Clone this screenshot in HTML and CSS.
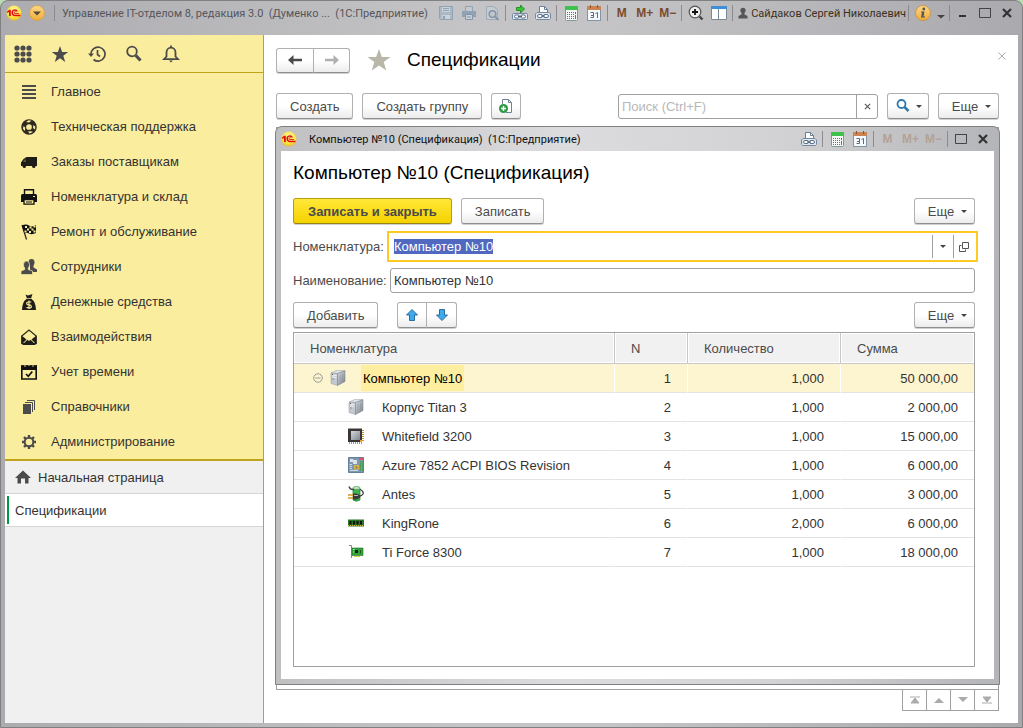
FILE: index.html
```html
<!DOCTYPE html>
<html lang="ru">
<head>
    <meta charset="UTF-8">
    <meta name="viewport" content="width=device-width, initial-scale=1.0">
    <title>Управление IT-отделом 8</title>
    <link rel="stylesheet" href="styles.css">
</head>
<body>

<!-- общие значки -->
<svg class="sprite" aria-hidden="true">
    <defs>
        <radialGradient id="gold" cx="50%" cy="35%" r="65%">
            <stop offset="0" stop-color="#fffbb0"/><stop offset="0.7" stop-color="#fbe23a"/><stop offset="1" stop-color="#e8b92c"/>
        </radialGradient>
        <linearGradient id="amber" x1="0" y1="0" x2="0" y2="1">
            <stop offset="0" stop-color="#fbd88b"/><stop offset="1" stop-color="#f0ac35"/>
        </linearGradient>
        <linearGradient id="steel" x1="0" y1="0" x2="1" y2="1">
            <stop offset="0" stop-color="#d5d9de"/><stop offset="1" stop-color="#7d848d"/>
        </linearGradient>
    </defs>
    <symbol id="i-logo" viewBox="0 0 16 16">
        <circle cx="8" cy="8" r="7.500" fill="url(#gold)"/>
        <path d="M1 6.500L3.300 4.800H4.800V11H3V7.200L1 7.800Z" fill="#e01010"/>
        <path d="M11.300 6.500A2.700 2.700 0 1 0 9 10.400H14.500" fill="none" stroke="#e01010" stroke-width="1.500"/>
        <path d="M10 7.200A1 1 0 1 0 9 8.600H13" fill="none" stroke="#e01010" stroke-width="0.900"/>
    </symbol>
    <symbol id="i-printlink" viewBox="0 0 16 16">
        <path d="M4.500 8V1.500H9.500L12.500 4.500V8" fill="#fff" stroke="#6a7f98"/>
        <path d="M9.500 1.500V4.500H12.500" fill="none" stroke="#6a7f98"/>
        <path d="M2 7.500H14L15.500 9V13.500L14.500 14.500H1.500L0.500 13.500V9Z" fill="#dfe6ee" stroke="#7288a0"/>
        <rect x="2.500" y="9.500" width="5" height="3" rx="1.500" fill="#fff" stroke="#5d728a"/>
        <rect x="8.500" y="9.500" width="5" height="3" rx="1.500" fill="#fff" stroke="#5d728a"/>
        <path d="M6 11H10" stroke="#4d6178"/>
    </symbol>
    <symbol id="i-calc" viewBox="0 0 16 16">
        <rect x="2.500" y="1.500" width="12" height="14" rx="1" fill="#f4f7f5" stroke="#7f9a90"/>
        <rect x="2" y="1" width="13" height="4" fill="#3fc24c"/>
        <path d="M4 7.500H11M4 9.500H11M4 11.500H11M4 13.500H11" stroke="#5f7573" stroke-dasharray="1 1"/>
        <path d="M12.500 7V9" stroke="#f03030"/><path d="M12.500 10V14" stroke="#5f7573"/>
    </symbol>
    <symbol id="i-cal" viewBox="0 0 16 16">
        <rect x="1.500" y="3" width="13" height="12.500" fill="#f6f9fb" stroke="#8295a5"/>
        <rect x="1" y="1" width="14" height="4" fill="#c98452"/>
        <path d="M4.500 0V3M11.500 0V3" stroke="#8c5530"/>
        <path d="M4.500 7.500H7.500V12.500H4.500M5 10.500H7.500M9.500 8.500L11.500 7.500V13" fill="none" stroke="#5c6c7c"/>
    </symbol>
    <symbol id="i-max" viewBox="0 0 12 12"><path d="M0.500 1.500H11.500V10.500H0.500Z" fill="none" stroke="#444"/><path d="M0 1.500H12" stroke="#444"/></symbol>
    <symbol id="i-close" viewBox="0 0 12 12"><path d="M2 2L10 10M10 2L2 10" stroke="#333" stroke-width="2.200"/></symbol>
    <symbol id="i-tower" viewBox="0 0 16 16">
        <path d="M1 3L6.500 0.500H15L8 3.500Z" fill="#dfe3e7" stroke="#9aa1a9" stroke-width="0.500"/>
        <path d="M1 3L7.500 3.500V15.500L1 13.500Z" fill="#c3c9d0" stroke="#8e959e" stroke-width="0.500"/>
        <path d="M7.500 3.500L15 0.800V11.500L7.500 15.500Z" fill="url(#steel)" stroke="#6d7580" stroke-width="0.500"/>
        <path d="M2 5L6.500 5.500M2 7L6.500 7.500" stroke="#f3f5f7"/><path d="M3 8.500V9.500M2.500 4V5" stroke="#555"/>
        <path d="M10 5V13.500M12.500 4V12" stroke="#858d97" stroke-width="0.500"/>
    </symbol>
</svg>

<div class="app">
    <header class="titlebar">
        <svg class="ico16 logo"><use href="#i-logo"/></svg>
        <button class="round" aria-label="Главное меню">
            <svg class="ico16" viewBox="0 0 16 16"><circle cx="8" cy="8" r="7.500" fill="url(#amber)" stroke="#d99c3c" stroke-width="0.700"/><path d="M4 6.500H12L8 10.500Z" fill="#5c4636"/></svg>
        </button>
        <span class="sep"></span>
        <span class="app-title">Управление IT-отделом 8, редакция 3.0 &nbsp;(Думенко ... &nbsp;(1С:Предприятие)</span>

        <button class="tool" disabled aria-label="Сохранить"><svg class="ico16" viewBox="0 0 16 16"><path d="M1.500 1.500H14.500V14.500H2.500L1.500 13.500Z" fill="#aab8c5" stroke="#8fa3b5"/><path d="M4 2H12V7H4Z" fill="#cbd2d8"/><path d="M5 3.500H11M5 5.500H11" stroke="#8fa3b5"/><path d="M4 10H12V14H4Z" fill="#cbd2d8"/><path d="M6 11V14" stroke="#8fa3b5" stroke-width="2"/></svg></button>
        <button class="tool" disabled aria-label="Печать"><svg class="ico16" viewBox="0 0 16 16"><path d="M4.500 6V1.500H11.500V6" fill="#c4cad0" stroke="#8fa3b5"/><path d="M1 6H15V12H1Z" fill="#8fa3b5"/><path d="M4.500 9.500H11.500V14.500H4.500Z" fill="#cbd0d5" stroke="#8395a7"/><path d="M6 12H10" stroke="#8395a7"/></svg></button>
        <button class="tool" disabled aria-label="Просмотр"><svg class="ico16" viewBox="0 0 16 16"><path d="M2.500 1.500H9.500L13.500 5V14.500H2.500Z" fill="#c7cbd0" stroke="#9dabb8"/><circle cx="8.500" cy="9" r="3.300" fill="#bdc6ce" stroke="#8395a7" stroke-width="1.500"/><path d="M11 11.500L14.500 15" stroke="#8395a7" stroke-width="2"/></svg></button>
        <span class="sep"></span>
        <button class="tool" aria-label="Перейти по ссылке"><svg class="ico16" viewBox="0 0 16 16"><rect x="0.500" y="8.500" width="15" height="6" rx="1" fill="#dfe6ee" stroke="#7288a0"/><rect x="2.500" y="10" width="5" height="3" rx="1.500" fill="#fff" stroke="#5d728a"/><rect x="8.500" y="10" width="5" height="3" rx="1.500" fill="#fff" stroke="#5d728a"/><path d="M6 11.500H10" stroke="#4d6178"/><path d="M4.500 2.500H8.500V0L12.500 4L8.500 8V5.500H4.500Z" fill="#36c536" stroke="#168016" stroke-width="0.800"/></svg></button>
        <button class="tool" aria-label="Получить ссылку"><svg class="ico16"><use href="#i-printlink"/></svg></button>
        <span class="sep"></span>
        <button class="tool" aria-label="Калькулятор"><svg class="ico16"><use href="#i-calc"/></svg></button>
        <button class="tool" aria-label="Календарь"><svg class="ico16"><use href="#i-cal"/></svg></button>
        <span class="sep"></span>
        <button class="tool mem">M</button>
        <button class="tool mem">M+</button>
        <button class="tool mem">M−</button>
        <span class="sep"></span>
        <button class="tool" aria-label="Масштаб"><svg class="ico16" viewBox="0 0 16 16"><circle cx="7" cy="7" r="5.800" fill="#eee" stroke="#555" stroke-width="1.200"/><path d="M7 4V10M4 7H10" stroke="#111" stroke-width="1.800"/><path d="M11.500 11.500L14.500 14.500" stroke="#444" stroke-width="2.400"/></svg></button>
        <button class="tool" aria-label="Панели"><svg class="ico16" viewBox="0 0 16 16"><path d="M0.500 1.500H15.500V14.500H0.500Z" fill="#fff" stroke="#788998"/><path d="M0 1H16V4H0Z" fill="#3f8fd8"/><path d="M7.500 4V15" stroke="#788998"/></svg></button>
        <span class="sep"></span>
        <button class="user">
            <svg class="ico10" viewBox="0 0 10 12"><circle cx="5" cy="3.300" r="2.600" fill="#555"/><path d="M3.500 5H6.500V7.500L9.500 9V11.500H0.500V9L3.500 7.500Z" fill="#555"/></svg>
            Сайдаков Сергей Николаевич
        </button>
        <span class="sep"></span>
        <button class="tool" aria-label="Информация"><svg class="ico16" viewBox="0 0 16 16"><circle cx="8" cy="8" r="7.500" fill="url(#amber)" stroke="#c98f35" stroke-width="0.800"/><circle cx="8.800" cy="4" r="1.400" fill="#555"/><path d="M6 6.500H9.500L8.500 11.500H10V12.500H6L7 7.500H6Z" fill="#555"/></svg></button>
        <button class="tool small" aria-label="Еще команды"><svg class="ico10" viewBox="0 0 10 12"><path d="M1 8H9L5 11.500Z" fill="#444"/></svg></button>
        <span class="sep"></span>
        <button class="tool win" aria-label="Свернуть"><svg class="ico12" viewBox="0 0 12 12"><path d="M2 9H9" stroke="#333" stroke-width="2"/></svg></button>
        <button class="tool win" aria-label="Развернуть"><svg class="ico12"><use href="#i-max"/></svg></button>
        <button class="tool win" aria-label="Закрыть"><svg class="ico12"><use href="#i-close"/></svg></button>
    </header>

    <div class="workspace">
        <aside class="sidebar">
            <div class="quick">
                <button aria-label="Меню функций"><svg viewBox="0 0 18 18" fill="#4b4b4b"><circle cx="3" cy="3" r="2.600"/><circle cx="9" cy="3" r="2.600"/><circle cx="15" cy="3" r="2.600"/><circle cx="3" cy="9" r="2.600"/><circle cx="9" cy="9" r="2.600"/><circle cx="15" cy="9" r="2.600"/><circle cx="3" cy="15" r="2.600"/><circle cx="9" cy="15" r="2.600"/><circle cx="15" cy="15" r="2.600"/></svg></button>
                <button aria-label="Избранное"><svg viewBox="0 0 18 18"><path d="M9 1L11.100 7H17.200L12.300 10.700L14.200 17L9 13.200L3.800 17L5.700 10.700L0.800 7H6.900Z" fill="#4b4b4b"/></svg></button>
                <button aria-label="История"><svg viewBox="0 0 18 18" fill="none" stroke="#4b4b4b" stroke-width="1.700"><path d="M3 9.500A7 7 0 1 1 5.500 14.500"/><path d="M9.500 5V9.500L12 11.500"/><path d="M0 8.500H6L3 12Z" fill="#4b4b4b" stroke="none"/></svg></button>
                <button aria-label="Поиск"><svg viewBox="0 0 18 18" fill="none" stroke="#4b4b4b"><circle cx="7" cy="6.500" r="4.800" stroke-width="1.800"/><path d="M10.800 10.500L15.500 15.500" stroke-width="3.200"/></svg></button>
                <button aria-label="Оповещения"><svg viewBox="0 0 18 18" fill="none" stroke="#4b4b4b" stroke-width="1.800"><path d="M2 14.200H16L13.500 11.500V7.500A4.500 4.800 0 0 0 4.500 7.500V11.500Z"/><path d="M9 0.500V3"/><path d="M7 15.500H11L9 17.500Z" fill="#4b4b4b" stroke="none"/></svg></button>
            </div>

            <nav class="menu">
                <a href="#"><svg viewBox="0 0 16 16"><path d="M1 2H15M1 6H15M1 10H15M1 14H15" stroke="#4b4b4b" stroke-width="2"/></svg>Главное</a>
                <a href="#"><svg viewBox="0 0 16 16"><circle cx="8" cy="8" r="5.300" fill="none" stroke="#2e2a20" stroke-width="4.900"/><path d="M5 3L7.500 1.200L10.500 1.700L8 3.500ZM12.500 6L14.300 7.500L14 10.500L12 9ZM2.500 7L4.200 8.500L4 12L2 10ZM7 12.500L10 12.200L12 13L8.500 14.500Z" fill="#fbed9e"/></svg>Техническая поддержка</a>
                <a href="#"><svg viewBox="0 0 16 16"><path d="M5.500 3H16V12H14.500A2 2 0 0 1 11 12H5A2 2 0 0 1 1.500 12H0V8.500L2.500 5Z" fill="#1f1d18"/><path d="M2 8L3.500 5.500H5V8Z" fill="#5c563b"/><circle cx="3.300" cy="12.500" r="1.600" fill="#1f1d18"/><circle cx="12.800" cy="12.500" r="1.600" fill="#1f1d18"/></svg>Заказы поставщикам</a>
                <a href="#"><svg viewBox="0 0 16 16"><path d="M3.500 6V0.800H12.500V6" fill="#fbed9e" stroke="#111" stroke-width="1.400"/><path d="M0 6.500Q0 5 1.500 5H14.500Q16 5 16 6.500V13H0Z" fill="#111"/><path d="M3 10.500H13V15.200H3Z" fill="#fbed9e" stroke="#111" stroke-width="1.300"/><path d="M5 13H11" stroke="#111"/><path d="M12 7.500H14" stroke="#fbed9e"/></svg>Номенклатура и склад</a>
                <a href="#"><svg viewBox="0 0 16 16"><path d="M1 1L5.500 15.500" stroke="#222" stroke-width="1.200"/><path d="M1 1.500Q5 -0.500 8 1.500T15 1V9Q11 11 8 9.500T3.500 10Z" fill="#111"/><path d="M4 2H6V4H4ZM8.500 2.500H10.500V4.500H8.500ZM12.500 1.500H14.500V3.500H12.500ZM6 4.500H8V6.500H6ZM10.500 4.500H12.500V6.500H10.500ZM3.500 6.500H5.500V8.500H3.500ZM8 7H10V9H8ZM12.500 6.500H14.500V8.500H12.500Z" fill="#fbed9e"/></svg>Ремонт и обслуживание</a>
                <a href="#"><svg viewBox="0 0 16 16" fill="#4b4b4b"><ellipse cx="10.500" cy="3.500" rx="3" ry="3.400"/><path d="M9 6H12.500V8.500L16 10.500V13H9Z"/><path d="M2.500 5.500Q2.500 2 5.500 2T8.500 5.500Q8.500 8 7.300 9V10.500L11.500 12V15.500H0V12L3.700 10.500V9Q2.500 8 2.500 5.500Z" stroke="#fbed9e" stroke-width="0.700"/></svg>Сотрудники</a>
                <a href="#"><svg viewBox="0 0 16 16"><path d="M4.500 0.500L7 1.500L11.500 0L10 4.500Q15 8 15 16H1Q1 8 6 4.500Z" fill="#1f1d18"/><path d="M6 4.500H10" stroke="#fbed9e" stroke-width="0.700"/><path d="M10.300 8H7.300Q5.500 8 5.700 9.500T8 10.800T10.300 12.500T8 13.700H5.500M8 6.500V15" fill="none" stroke="#fbed9e" stroke-width="1.200"/></svg>Денежные средства</a>
                <a href="#"><svg viewBox="0 0 16 16"><path d="M0.800 7L8 1L15.200 7V14.500H0.800Z" fill="none" stroke="#2b2820" stroke-width="1.200"/><path d="M0.500 6.500L5.500 10.500L0.500 15.500ZM15.500 6.500L10.500 10.500L15.500 15.500ZM1 16L6.500 10.800L8 12L9.500 10.800L15 16Z" fill="#1f1d18"/></svg>Взаимодействия</a>
                <a href="#"><svg viewBox="0 0 16 16"><path d="M0.800 2H15.200V15H0.800Z" fill="none" stroke="#111" stroke-width="1.600"/><path d="M0 1.500H16V6H0Z" fill="#111"/><path d="M4 0V3M12 0V3M8 0V2" stroke="#fbed9e" stroke-width="0.800"/><path d="M5 10L7.300 12.300L11.300 7.500" fill="none" stroke="#111" stroke-width="1.700"/></svg>Учет времени</a>
                <a href="#"><svg viewBox="0 0 16 16"><path d="M2 5H10V15H2Z" fill="#4b4b4b"/><path d="M4 3.500H11.500V13M6 1.500H13.500V11" fill="none" stroke="#4b4b4b"/></svg>Справочники</a>
                <a href="#"><svg viewBox="0 0 16 16" fill="none" stroke="#4b4b4b"><circle cx="8" cy="8" r="4.300" stroke-width="2"/><path d="M8 1V3.500M8 12.500V15M1 8H3.500M12.500 8H15M3 3L4.800 4.800M11.200 11.200L13 13M13 3L11.200 4.800M4.800 11.200L3 13" stroke-width="2.400"/></svg>Администрирование</a>
            </nav>

            <div class="opened">
                <a href="#"><svg viewBox="0 0 16 14"><path d="M8 0.500L16 8H13.500V13.500H10V8.500H6V13.500H2.500V8H0Z" fill="#4b4b4b"/></svg>Начальная страница</a>
                <a href="#" class="active">Спецификации</a>
            </div>
        </aside>

        <main class="page">
            <div class="page-head">
                <div class="group">
                    <button class="btn nav" aria-label="Назад"><svg class="ico16" viewBox="0 0 16 16"><path d="M1 8L6.500 3V6.700H15V9.300H6.500V13Z" fill="#4b4b4b"/></svg></button>
                    <button class="btn nav" aria-label="Вперед"><svg class="ico16" viewBox="0 0 16 16"><path d="M15 8L9.500 3V6.700H1V9.300H9.500V13Z" fill="#b0b0b0"/></svg></button>
                </div>
                <svg class="fav" viewBox="0 0 24 24"><path d="M12 1L14.900 9H23.500L16.700 14L19.300 22.500L12 17.400L4.700 22.500L7.300 14L0.500 9H9.100Z" fill="#b9b7a9"/></svg>
                <h1>Спецификации</h1>
                <button class="page-close" aria-label="Закрыть страницу"><svg viewBox="0 0 8 8"><path d="M0.500 0.500L7.500 7.500M7.500 0.500L0.500 7.500" stroke="#aaa"/></svg></button>
            </div>

            <div class="toolbar">
                <button class="btn">Создать</button>
                <button class="btn">Создать группу</button>
                <button class="btn icon" aria-label="Создать копированием"><svg class="ico16" viewBox="0 0 16 16"><path d="M4.500 6V1.500H10.500L13.500 4.500V14.500H8" fill="#fff" stroke="#6f8296"/><path d="M10.500 1.500V4.500H13.500" fill="none" stroke="#6f8296"/><circle cx="5.500" cy="10.500" r="4.500" fill="#2d9a42"/><path d="M5.500 8V13M3 10.500H8" stroke="#fff" stroke-width="1.500"/></svg></button>
                <div class="search">
                    <input type="text" placeholder="Поиск (Ctrl+F)" aria-label="Поиск">
                    <button aria-label="Очистить"><svg class="cross" viewBox="0 0 8 8"><path d="M1 1L7 7M7 1L1 7" stroke="#555" stroke-width="1.300"/></svg></button>
                </div>
                <button class="btn find" aria-label="Найти"><svg class="ico16" viewBox="0 0 16 16" fill="none" stroke="#2f78ad"><circle cx="6.500" cy="6" r="4" stroke-width="1.800"/><path d="M9.500 9L13.500 13" stroke-width="2.500"/></svg><i class="caret"></i></button>
                <button class="btn more">Еще<i class="caret"></i></button>
            </div>

            <div class="list">
                <!-- окно элемента -->
                <section class="dialog">
                    <header class="dialog-bar">
                        <svg class="ico16"><use href="#i-logo"/></svg>
                        <span class="dialog-title">Компьютер №10 (Спецификация) &nbsp;(1С:Предприятие)</span>
                        <button class="tool" aria-label="Получить ссылку"><svg class="ico16"><use href="#i-printlink"/></svg></button>
                        <span class="sep"></span>
                        <button class="tool" aria-label="Калькулятор"><svg class="ico16"><use href="#i-calc"/></svg></button>
                        <button class="tool" aria-label="Календарь"><svg class="ico16"><use href="#i-cal"/></svg></button>
                        <span class="sep"></span>
                        <button class="tool mem" disabled>M</button>
                        <button class="tool mem" disabled>M+</button>
                        <button class="tool mem" disabled>M−</button>
                        <span class="sep"></span>
                        <button class="tool win" aria-label="Развернуть"><svg class="ico12"><use href="#i-max"/></svg></button>
                        <button class="tool win" aria-label="Закрыть"><svg class="ico12"><use href="#i-close"/></svg></button>
                    </header>

                    <div class="dialog-body">
                        <h2>Компьютер №10 (Спецификация)</h2>

                        <div class="commands">
                            <button class="btn primary">Записать и закрыть</button>
                            <button class="btn">Записать</button>
                            <button class="btn more">Еще<i class="caret"></i></button>
                        </div>

                        <div class="field">
                            <label for="item">Номенклатура:</label>
                            <div class="combo">
                                <input type="text" id="item" value="Компьютер №10">
                                <button aria-label="Выбрать"><i class="caret"></i></button>
                                <button aria-label="Открыть"><svg viewBox="0 0 10 10" fill="none" stroke="#555"><path d="M3.500 0.500H9.500V6.500H3.500Z"/><path d="M2.500 3.500H0.500V9.500H6.500V7.500"/></svg></button>
                            </div>
                        </div>
                        <div class="field">
                            <label for="name">Наименование:</label>
                            <input type="text" id="name" class="box" value="Компьютер №10">
                        </div>

                        <div class="commands rows">
                            <button class="btn">Добавить</button>
                            <div class="group arrows">
                                <button class="btn" aria-label="Вверх"><svg viewBox="0 0 12 12"><path d="M6 0.500L11.500 6H8.500V11.500H3.500V6H0.500Z" fill="#3fa9ee" stroke="#2b6d99"/></svg></button>
                                <button class="btn" aria-label="Вниз"><svg viewBox="0 0 12 12"><path d="M6 11.500L0.500 6H3.500V0.500H8.500V6H11.500Z" fill="#3fa9ee" stroke="#2b6d99"/></svg></button>
                            </div>
                            <button class="btn more">Еще<i class="caret"></i></button>
                        </div>

                        <div class="grid">
                            <table>
                                <colgroup><col><col class="c-n"><col class="c-qty"><col class="c-sum"></colgroup>
                                <thead>
                                    <tr><th>Номенклатура</th><th>N</th><th>Количество</th><th>Сумма</th></tr>
                                </thead>
                                <tbody>
                                    <tr class="selected">
                                        <td><div class="cell root"><svg class="minus" viewBox="0 0 10 10" fill="none" stroke="#999"><circle cx="5" cy="5" r="4.300"/><path d="M2.500 5H7.500"/></svg><svg class="ico16"><use href="#i-tower"/></svg><span>Компьютер №10</span></div></td>
                                        <td>1</td><td>1,000</td><td>50 000,00</td>
                                    </tr>
                                    <tr>
                                        <td><div class="cell"><svg class="ico16"><use href="#i-tower"/></svg><span>Корпус Titan 3</span></div></td>
                                        <td>2</td><td>1,000</td><td>2 000,00</td>
                                    </tr>
                                    <tr>
                                        <td><div class="cell"><svg class="ico16" viewBox="0 0 16 16"><path d="M1 15H14M15 2V14" stroke="#c7952f" stroke-width="2" stroke-dasharray="1 1"/><path d="M0 0.500H14V14H0Z" fill="#3a3636"/><path d="M3 3H12V12H3Z" fill="url(#steel)"/><path d="M12 12H14V14H12Z" fill="#e8a020"/></svg><span>Whitefield 3200</span></div></td>
                                        <td>3</td><td>1,000</td><td>15 000,00</td>
                                    </tr>
                                    <tr>
                                        <td><div class="cell"><svg class="ico16" viewBox="0 0 16 16"><path d="M0.500 0.500H15.500V15.500H0.500Z" fill="#7d98b3" stroke="#667f98"/><path d="M11 1H15V3H11Z" fill="#df5560"/><path d="M12.500 4V14M14.500 4V14" stroke="#4d9a63"/><path d="M2 2H5V5H2ZM5 3H9V7H5Z" fill="#dce3e8"/><path d="M6 8H11V12.500H6Z" fill="#d9b44c"/><path d="M7.500 9.500H9.500V11.500H7.500Z" fill="#8c7a58"/><path d="M1.500 7.500H4M1.500 9.500H4M1.500 11.500H4M2 13.500H10" stroke="#d0dbe5"/></svg><span>Azure 7852 ACPI BIOS Revision</span></div></td>
                                        <td>4</td><td>1,000</td><td>6 000,00</td>
                                    </tr>
                                    <tr>
                                        <td><div class="cell"><svg class="ico16" viewBox="0 0 16 16"><path d="M5 2V14Q8 16.500 12 14V2Z" fill="#3cb64b" stroke="#227c32" stroke-width="0.700"/><ellipse cx="8.500" cy="2" rx="3.600" ry="1.600" fill="#b8e7b8" stroke="#43924b" stroke-width="0.600"/><path d="M1 0.500Q2 4 6 3.500M12 3.500Q16 5 15 8Q14 10 11 10" fill="none" stroke="#444" stroke-width="1.300"/><path d="M5 7.500H8.500L11.500 9L12.500 10.500L11.500 12L8.500 13.500H5Z" fill="#3a3a3a"/><path d="M0 9H5M0 12H5" stroke="#d89b22" stroke-width="1.400"/><path d="M6 9.500H10" stroke="#bbb"/></svg><span>Antes</span></div></td>
                                        <td>5</td><td>1,000</td><td>3 000,00</td>
                                    </tr>
                                    <tr>
                                        <td><div class="cell"><svg class="ico16" viewBox="0 0 16 16"><path d="M0 4.500H16V11.500H0Z" fill="#267529"/><path d="M1.500 6H3.500V9.500H1.500ZM5 6H7V9.500H5ZM8.500 6H10.500V9.500H8.500ZM12 6H14V9.500H12Z" fill="#14120c"/><path d="M0 10.500H16" stroke="#d8b93c" stroke-dasharray="1 1"/></svg><span>KingRone</span></div></td>
                                        <td>6</td><td>2,000</td><td>6 000,00</td>
                                    </tr>
                                    <tr>
                                        <td><div class="cell"><svg class="ico16" viewBox="0 0 16 16"><path d="M1 1.500H3.500V14" fill="none" stroke="#888"/><path d="M4 4H15V11.500H4Z" fill="#33a23a" stroke="#1f7427" stroke-width="0.600"/><path d="M7 6H10V9H7Z" fill="#14200f"/><path d="M12.500 6V9.500" stroke="#1c5a22"/><path d="M5 5.500H6.500M5 8H6" stroke="#d4e8d4"/><path d="M6 12.500H12" stroke="#d8d03c"/></svg><span>Ti Force 8300</span></div></td>
                                        <td>7</td><td>1,000</td><td>18 000,00</td>
                                    </tr>
                                </tbody>
                            </table>
                        </div>
                    </div>
                </section>
            </div>

            <div class="pager">
                <button aria-label="В начало"><svg viewBox="0 0 10 8"><path d="M0 1H10M1 7L5 2L9 7Z" fill="#aaa" stroke="#aaa"/></svg></button>
                <button aria-label="Выше"><svg viewBox="0 0 10 8"><path d="M0 7L5 2L10 7Z" fill="#aaa"/></svg></button>
                <button aria-label="Ниже"><svg viewBox="0 0 10 8"><path d="M0 1L5 6L10 1Z" fill="#aaa"/></svg></button>
                <button aria-label="В конец"><svg viewBox="0 0 10 8"><path d="M0 7H10M1 1L5 6L9 1Z" fill="#aaa" stroke="#aaa"/></svg></button>
            </div>
        </main>
    </div>
</div>

<script>
    // курсор сразу в поле номенклатуры
    const item = document.getElementById("item");
    item.focus();
    item.select();
</script>

</body>
</html>
```

FILE: styles.css
```css
* {
    box-sizing: border-box;
}
body {
    margin: 0;
    font-family: "Liberation Sans", Arial, sans-serif;
    font-size: 13px;
    color: #333;
    background-color: #b9dcb5;
}
button, input {
    font: inherit;
    color: inherit;
}
button {
    display: flex;
    align-items: center;
    justify-content: center;
    padding: 0;
    border: none;
    background: none;
    cursor: pointer;
}
input {
    min-width: 0;
    padding: 0 3px;
    border: none;
    outline: none;
    background: none;
}
input::selection {
    color: #fff;
    background-color: #5068c0;
}
a {
    color: inherit;
    text-decoration: none;
}
svg {
    flex: none;
}
.sprite {
    position: absolute;
    width: 0;
    height: 0;
}
.ico16 {
    width: 16px;
    height: 16px;
}
.ico12 {
    width: 12px;
    height: 12px;
}
.ico10 {
    width: 10px;
    height: 12px;
}

/* окно программы */
.app {
    display: flex;
    flex-direction: column;
    height: 100vh;
    min-height: 600px;
    padding: 0 4px 4px;
    border: 1px solid #808080;
    border-radius: 8px 8px 0 0;
    background: linear-gradient(90deg, #acacb0, #c4c4c6 45%, #c4c4c6 60%, #a9a9ae);
}
.titlebar {
    display: flex;
    align-items: center;
    height: 34px;
    padding: 0 0 10px;
    font-family: Roboto, sans-serif;
    font-size: 11px;
}
.logo {
    margin-left: 1px;
}
.round {
    margin: 0 7px;
}
.sep {
    flex: none;
    width: 1px;
    height: 16px;
    margin: 0 2px;
    background-color: #8b8b8f;
}
.app-title {
    flex: 1;
    min-width: 0;
    padding-left: 5px;
    color: #55555c;
    white-space: nowrap;
    overflow: hidden;
}
.tool {
    flex: none;
    width: 23px;
    height: 22px;
}
.win {
    width: 22px;
}
.small {
    width: 13px;
}
.mem {
    font-family: "Liberation Sans", Arial, sans-serif;
    font-weight: bold;
    font-size: 12px;
    color: #7b4a2c;
}
.mem:disabled {
    color: #b3a296;
}
.user {
    gap: 3px;
    padding-left: 3px;
    color: #3c3020;
    white-space: nowrap;
}
.workspace {
    display: flex;
    flex: 1;
    min-height: 0;
    background-color: #fff;
}

/* левая панель */
.sidebar {
    display: flex;
    flex-direction: column;
    flex: none;
    width: 259px;
    border-right: 1px solid #bfa31c;
    background-color: #f0f0f0;
}
.quick {
    display: flex;
    gap: 19px;
    height: 38px;
    padding-left: 9px;
    border-bottom: 1px solid #bfa31c;
    background-color: #fbed9e;
}
.quick svg {
    width: 18px;
    height: 18px;
}
.menu {
    padding: 1px 0 0;
    border-bottom: 2px solid #bfa31c;
    background-color: #fbed9e;
}
.menu a {
    display: flex;
    align-items: center;
    gap: 14px;
    height: 35px;
    padding-left: 16px;
}
.menu svg {
    width: 16px;
    height: 16px;
}
.opened a {
    display: flex;
    align-items: center;
    gap: 7px;
    height: 33px;
    padding-left: 10px;
    border-bottom: 1px solid #d5d5d5;
}
.opened svg {
    width: 16px;
    height: 14px;
}
.opened .active {
    position: relative;
    background-color: #fff;
}
.opened .active::before {
    content: "";
    position: absolute;
    left: 2px;
    top: 2px;
    bottom: 2px;
    width: 2px;
    background-color: #009646;
}

/* кнопки */
.btn {
    height: 26px;
    padding: 0 13px;
    border: 1px solid #b0b0b0;
    border-bottom-color: #8f8f8f;
    border-radius: 3px;
    background: linear-gradient(#fff 50%, #ececec);
    box-shadow: 0 1px 0 #d0d0d0;
    color: #4b4b4b;
    white-space: nowrap;
}
.primary {
    padding: 0 14px;
    border-color: #b89c10;
    border-bottom-color: #9a8210;
    background: linear-gradient(#ffe838, #f5d200);
    font-weight: bold;
}
.more {
    gap: 7px;
    width: 61px;
    padding: 0 5px 0 11px;
}
.caret {
    border: 3px solid transparent;
    border-top-color: #444;
    border-bottom: none;
}
.group {
    display: flex;
}
.group .btn:first-child {
    border-radius: 3px 0 0 3px;
}
.group .btn:last-child {
    margin-left: -1px;
    border-radius: 0 3px 3px 0;
}

/* страница со списком */
.page {
    display: flex;
    flex-direction: column;
    flex: 1;
    min-width: 0;
    padding: 12px 19px 12px 12px;
}
.page-head {
    display: flex;
    align-items: center;
    height: 26px;
}
.nav {
    width: 38px;
    height: 25px;
    padding: 0;
}
.group .nav:last-child {
    width: 37px;
}
.fav {
    width: 24px;
    height: 24px;
    margin: 0 16px 0 17px;
}
h1, h2 {
    margin: 0;
    font-size: 19px;
    line-height: 22px;
    font-weight: normal;
    color: #000;
}
.page-close {
    width: 8px;
    height: 8px;
    margin: 0 -7px 8px auto;
}
.page-close svg {
    width: 8px;
    height: 8px;
}
.toolbar {
    display: flex;
    gap: 9px;
    align-items: center;
    margin: 20px 0 8px;
}
.icon {
    width: 30px;
    padding: 0;
}
.search {
    display: flex;
    width: 260px;
    height: 25px;
    margin-left: auto;
    border: 1px solid #a0a0a0;
    border-radius: 3px;
}
.search input {
    flex: 1;
}
.search input::placeholder {
    color: #b8b8b8;
}
.search button {
    width: 21px;
    border-left: 1px solid #a0a0a0;
}
.cross {
    width: 7px;
    height: 7px;
}
.find {
    gap: 5px;
    width: 42px;
    padding: 0;
}
.list {
    position: relative;
    flex: 1;
    border: 1px solid #a0a0a0;
}
.pager {
    display: flex;
    align-self: flex-end;
    margin-top: -1px;
    border: solid #a0a0a0;
    border-width: 1px 0 1px 1px;
}
.pager button {
    width: 24px;
    height: 20px;
    border-right: 1px solid #a0a0a0;
}
.pager svg {
    width: 10px;
    height: 8px;
}

/* окно поверх списка */
.dialog {
    position: absolute;
    top: -2px;
    right: -2px;
    bottom: 4px;
    left: -2px;
    display: flex;
    flex-direction: column;
    padding: 0 5px 5px;
    border: 1px solid #808080;
    border-radius: 7px 7px 0 0;
    background: linear-gradient(90deg, #c0c0c2, #dcdcde 40%, #d2d2d4 70%, #b4b5b8);
}
.dialog-bar {
    display: flex;
    align-items: center;
    height: 24px;
    font-family: Roboto, sans-serif;
    font-size: 11px;
    color: #111;
}
.dialog-title {
    flex: 1;
    padding-left: 12px;
    white-space: nowrap;
}
.dialog-body {
    display: flex;
    flex-direction: column;
    flex: 1;
    padding: 11px 19px 12px 12px;
    background-color: #fff;
}
.commands {
    display: flex;
    gap: 9px;
    margin: 14px 0 10px;
}
.commands .more {
    margin-left: auto;
}
.rows {
    margin: 0 0 4px;
}
.arrows {
    margin-left: 10px;
}
.arrows .btn {
    width: 30px;
    padding: 0;
}
.arrows .btn:last-child {
    width: 31px;
}
.arrows svg {
    width: 12px;
    height: 12px;
}
.field {
    display: flex;
    align-items: center;
    margin-bottom: 9px;
}
.field label {
    flex: none;
    width: 97px;
    color: #4b4b4b;
}
.box, .combo {
    flex: 1;
    height: 25px;
    border: 1px solid #a0a0a0;
    border-radius: 3px;
}
.combo {
    display: flex;
}
.combo input {
    flex: 1;
}
.combo button {
    width: 21px;
    border-left: 1px solid #a0a0a0;
}
.combo svg {
    width: 10px;
    height: 10px;
}
.combo:focus-within {
    border-color: transparent;
    border-radius: 0;
    outline: 2px solid #fcca22;
    outline-offset: 1px;
}

/* таблица состава */
.grid {
    flex: 1;
    border: 1px solid #a0a0a0;
}
table {
    width: 100%;
    table-layout: fixed;
    border-collapse: separate;
    border-spacing: 0;
}
.c-n {
    width: 73px;
}
.c-qty {
    width: 153px;
}
.c-sum {
    width: 133px;
}
th {
    height: 31px;
    padding: 0 16px;
    border-right: 1px solid #c8c8c8;
    border-bottom: 1px solid #c8c8c8;
    background-color: #f1f1f1;
    box-shadow: inset 0 0 0 1px #fff;
    font-weight: normal;
    text-align: left;
    color: #4b4b4b;
}
td {
    height: 29px;
    padding: 0 16px;
    border-right: 1px solid #fff;
    border-bottom: 1px solid #e3e3e3;
    text-align: right;
}
th:last-child, td:last-child {
    border-right: none;
}
td:first-child {
    padding: 0;
}
.cell {
    display: flex;
    align-items: center;
    gap: 16px;
    padding-left: 54px;
}
.cell span {
    padding: 2px 2px 0;
    line-height: 24px;
}
.root {
    gap: 7px;
    padding-left: 19px;
}
.root span {
    margin-left: 8px;
    background-color: #feefa0;
    color: #000;
}
.minus {
    width: 10px;
    height: 10px;
}
.selected td {
    background-color: #fdf5cf;
}
```
